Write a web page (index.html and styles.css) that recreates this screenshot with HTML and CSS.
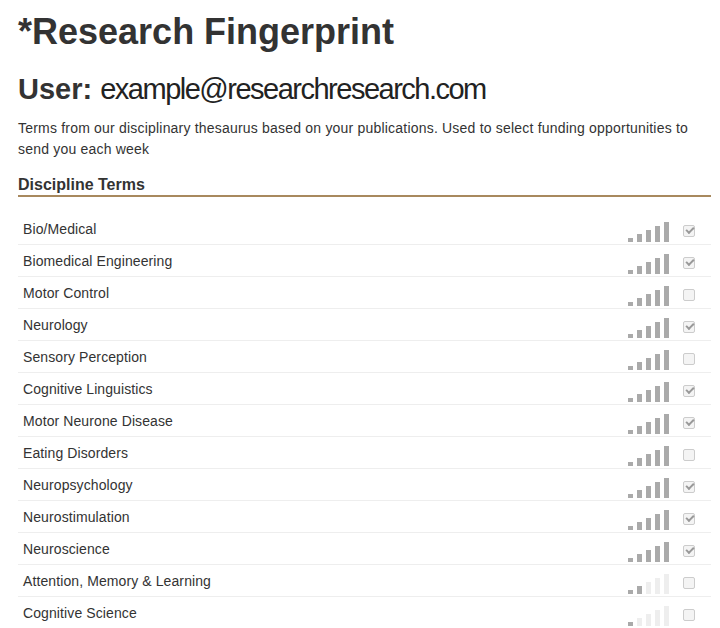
FILE: index.html
```html
<!DOCTYPE html>
<html>
<head>
<meta charset="utf-8">
<link rel="stylesheet" href="styles.css">
</head>
<body>
<div class="page">
  <h1 class="title">*Research Fingerprint</h1>
  <h2 class="user"><span class="user-label">User:</span> <span class="email">example@researchresearch.com</span></h2>
  <p class="intro">Terms from our disciplinary thesaurus based on your publications. Used to select funding opportunities to send you each week</p>
  <h3 class="section">Discipline Terms</h3>
  <ul class="terms">
    <li class="term"><span class="name">Bio/Medical</span><span class="bars l5"><i></i><i></i><i></i><i></i><i></i></span><span class="box on"></span></li>
    <li class="term"><span class="name">Biomedical Engineering</span><span class="bars l5"><i></i><i></i><i></i><i></i><i></i></span><span class="box on"></span></li>
    <li class="term"><span class="name">Motor Control</span><span class="bars l5"><i></i><i></i><i></i><i></i><i></i></span><span class="box"></span></li>
    <li class="term"><span class="name">Neurology</span><span class="bars l5"><i></i><i></i><i></i><i></i><i></i></span><span class="box on"></span></li>
    <li class="term"><span class="name">Sensory Perception</span><span class="bars l5"><i></i><i></i><i></i><i></i><i></i></span><span class="box"></span></li>
    <li class="term"><span class="name">Cognitive Linguistics</span><span class="bars l5"><i></i><i></i><i></i><i></i><i></i></span><span class="box on"></span></li>
    <li class="term"><span class="name">Motor Neurone Disease</span><span class="bars l5"><i></i><i></i><i></i><i></i><i></i></span><span class="box on"></span></li>
    <li class="term"><span class="name">Eating Disorders</span><span class="bars l5"><i></i><i></i><i></i><i></i><i></i></span><span class="box"></span></li>
    <li class="term"><span class="name">Neuropsychology</span><span class="bars l5"><i></i><i></i><i></i><i></i><i></i></span><span class="box on"></span></li>
    <li class="term"><span class="name">Neurostimulation</span><span class="bars l5"><i></i><i></i><i></i><i></i><i></i></span><span class="box on"></span></li>
    <li class="term"><span class="name">Neuroscience</span><span class="bars l5"><i></i><i></i><i></i><i></i><i></i></span><span class="box on"></span></li>
    <li class="term"><span class="name">Attention, Memory &amp; Learning</span><span class="bars l2"><i></i><i></i><i></i><i></i><i></i></span><span class="box"></span></li>
    <li class="term"><span class="name">Cognitive Science</span><span class="bars l1"><i></i><i></i><i></i><i></i><i></i></span><span class="box"></span></li>
  </ul>
</div>
</body>
</html>
```
FILE: styles.css
```css
html, body { margin: 0; padding: 0; background: #fff; }
body { font-family: "Liberation Sans", Arial, sans-serif; color: #333; }
.page { padding: 12px 9px 0 18px; }
.title { margin: 0; font-size: 36px; font-weight: bold; line-height: 40px; color: #333; }
.user { margin: 21px 0 0; font-size: 29px; line-height: 32px; font-weight: normal; color: #222; }
.user-label { font-weight: bold; color: #333; }
.email { letter-spacing: -1.5px; }
.intro { margin: 13px 0 0; font-size: 14px; line-height: 21px; color: #333; padding-right: 10px; letter-spacing: 0.2px; }
.section { margin: 15px 0 0; font-size: 16px; line-height: 20px; font-weight: bold; color: #333; padding-bottom: 0; border-bottom: 2px solid #a8895e; }
.terms { list-style: none; margin: 16px 0 0; padding: 0; }
.term { display: flex; align-items: center; height: 31px; border-bottom: 1px solid #eee; padding-left: 5px; font-size: 14px; color: #333; letter-spacing: 0.1px; }
.name { flex: 1; }
.bars { display: flex; align-items: flex-end; gap: 4px; height: 21px; margin-right: 14px; margin-top: 6px; }
.bars i { display: block; width: 5px; background: #eee; }
.bars i:nth-child(1) { height: 4px; }
.bars i:nth-child(2) { height: 8px; }
.bars i:nth-child(3) { height: 12px; }
.bars i:nth-child(4) { height: 16px; }
.bars i:nth-child(5) { height: 20px; }
.l5 i, .l2 i:nth-child(-n+2), .l1 i:nth-child(1) { background: #aaa; }
.box { width: 10px; height: 10px; border: 1px solid #ccc; border-radius: 2px; background: #f4f4f4; margin-right: 16px; margin-top: 4px; position: relative; }
.box.on::after { content: ""; position: absolute; left: 2px; top: 1px; width: 6px; height: 3px; border-left: 2px solid #999; border-bottom: 2px solid #999; transform: rotate(-45deg); }
```
